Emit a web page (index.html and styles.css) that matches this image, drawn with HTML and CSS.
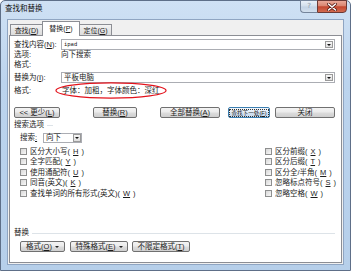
FILE: index.html
```html
<!DOCTYPE html>
<html lang="zh-CN">
<head>
  <meta charset="UTF-8">
  <title>查找和替换</title>
  <link rel="stylesheet" href="styles.css">
</head>
<body>
  <div class="window">
    <div class="titlebar">
      <span class="title">查找和替换</span>
      <div class="caption">
        <span class="cap-btn help">?</span>
        <span class="cap-btn close">
          <svg width="10" height="8" viewBox="0 0 10 8">
            <path d="M1.5 1 L8.5 7 M8.5 1 L1.5 7" stroke="#5a1d16" stroke-width="3" stroke-linecap="round"/>
            <path d="M1.5 1 L8.5 7 M8.5 1 L1.5 7" stroke="#fff" stroke-width="1.6" stroke-linecap="round"/>
          </svg>
        </span>
      </div>
    </div>

    <div class="client">
      <div class="tabs">
        <span class="tab">查找(<u>D</u>)</span>
        <span class="tab active">替换(<u>P</u>)</span>
        <span class="tab">定位(<u>G</u>)</span>
      </div>

      <div class="page">
        <div class="row field">
          <span class="lbl">查找内容(<u>N</u>):</span>
          <div class="combo">
            <span class="val mono">ipad</span>
            <span class="drop"><i class="arrow"></i></span>
          </div>
        </div>
        <div class="row info"><span class="lbl">选项:</span><span class="val">向下搜索</span></div>
        <div class="row info"><span class="lbl">格式:</span></div>

        <div class="row field replace">
          <span class="lbl">替换为(<u>I</u>):</span>
          <div class="combo">
            <span class="val">平板电脑</span>
            <span class="drop"><i class="arrow"></i></span>
          </div>
        </div>
        <div class="row fmt">
          <span class="lbl">格式:</span><span class="val">字体：加粗，字体颜色：深红</span>
        </div>

        <div class="row actions">
          <button class="btn less">&lt;&lt; 更少(<u>L</u>)</button>
          <button class="btn replace-one">替换(<u>R</u>)</button>
          <button class="btn replace-all">全部替换(<u>A</u>)</button>
          <button class="btn default find-next"><span class="focus">查找下一处(<u>F</u>)</span></button>
          <button class="btn close-btn">关闭</button>
        </div>

        <div class="section short">搜索选项</div>

        <div class="row search">
          <span class="search-lbl">搜索<u>:</u></span>
          <div class="select">
            <span class="val">向下</span>
            <span class="drop"><i class="arrow"></i></span>
          </div>
        </div>

        <div class="checks">
          <label class="check"><span class="box"></span>区分大小写(<u>H</u>)</label>
          <label class="check"><span class="box"></span>全字匹配(<u>Y</u>)</label>
          <label class="check"><span class="box"></span>使用通配符(<u>U</u>)</label>
          <label class="check"><span class="box"></span>同音(英文)(<u>K</u>)</label>
          <label class="check"><span class="box"></span>查找单词的所有形式(英文)(<u>W</u>)</label>
          <label class="check"><span class="box"></span>区分前缀(<u>X</u>)</label>
          <label class="check"><span class="box"></span>区分后缀(<u>T</u>)</label>
          <label class="check"><span class="box"></span>区分全/半角(<u>M</u>)</label>
          <label class="check"><span class="box"></span>忽略标点符号(<u>S</u>)</label>
          <label class="check"><span class="box"></span>忽略空格(<u>W</u>)</label>
        </div>

        <div class="section long">替换</div>

        <div class="row bottom">
          <button class="btn menu fmt-btn">格式(<u>O</u>)<i class="caret"></i></button>
          <button class="btn menu special">特殊格式(<u>E</u>)<i class="caret"></i></button>
          <button class="btn nofmt">不限定格式(<u>T</u>)</button>
        </div>

        <svg class="ring" width="112" height="17" viewBox="0 0 112 17">
          <ellipse cx="56" cy="8.5" rx="55" ry="7.6" fill="none" stroke="#e3121b" stroke-width="1.2"/>
        </svg>
      </div>
    </div>
  </div>
</body>
</html>
```

FILE: styles.css
```css
* {
  margin: 0;
  padding: 0;
  box-sizing: border-box;
}

body {
  width: 351px;
  height: 271px;
  overflow: hidden;
  background: #fff;
  font-family: "Liberation Sans", "Noto Sans CJK SC", sans-serif;
  font-size: 7.5px;
  line-height: 1;
  color: #1c1c1c;
  white-space: nowrap;
  text-autospace: no-autospace;
}

u {
  text-decoration: underline;
}

/* window frame */
.window {
  width: 351px;
  height: 271px;
  border: 1px solid #5e6f88;
  border-radius: 5px 5px 0 0;
  background: linear-gradient(#cfe1f4, #bcd4ee 30%, #b6cfea 100%);
  display: flex;
  flex-direction: column;
}

.titlebar {
  height: 18px;
  display: flex;
  justify-content: space-between;
  align-items: flex-start;
}

.title {
  padding: 4px 0 0 4px;
  color: #111;
}

.caption {
  display: flex;
  margin: -1px 3px 0 0;
}

.cap-btn {
  height: 13px;
  display: flex;
  align-items: center;
  justify-content: center;
}

.help {
  width: 17px;
  border: 1px solid #75859b;
  border-right: none;
  border-radius: 0 0 0 4px;
  background: linear-gradient(#e9f0f8, #d2deeb 48%, #c2d2e4 52%, #d3e0ee);
  color: #8a95a3;
  font-family: "DejaVu Sans", sans-serif;
  font-size: 7px;
}

.close {
  width: 30px;
  border: 1px solid #6b3a36;
  border-radius: 0 0 4px 0;
  background: linear-gradient(#eaa898, #d98570 45%, #c4472f 52%, #d26b50);
}

/* client area */
.client {
  flex: 1;
  margin: 0 6px 5px 6px;
  border: 1px solid #8fa5c2;
  background: #f0f0f0;
  padding: 1px;
  display: flex;
  flex-direction: column;
}

.tabs {
  height: 15px;
  margin-bottom: -1px;
  padding-left: 1px;
  display: flex;
  align-items: flex-start;
  position: relative;
  z-index: 1;
}

.tab {
  width: 33px;
  height: 11px;
  margin-top: 3px;
  border: 1px solid #8c8e94;
  border-bottom: none;
  background: linear-gradient(#f4f4f4, #e6e6e6 50%, #dcdcdc);
  display: flex;
  align-items: center;
  justify-content: center;
  font-size: 7px;
}

.tab.active {
  width: 38px;
  height: 15px;
  margin: 0 0 0 -1px;
  background: #fff;
  padding-bottom: 1px;
}

.tab + .tab:not(.active) {
  margin-left: -1px;
}

.page {
  flex: 1;
  position: relative;
  border: 1px solid #8c8e94;
  background: #fff;
  padding: 3px 6px 0 4px;
}

.row {
  display: flex;
  align-items: center;
}

.lbl {
  width: 47px;
  flex: none;
}

.field {
  height: 11px;
}

.field.replace {
  margin-top: 2px;
}

.info {
  height: 10px;
}

.fmt {
  height: 15px;
}

.fmt .val {
  padding-left: 1px;
}

.combo {
  flex: 1;
  height: 11px;
  border: 1px solid #abadb3;
  background: #fff;
  display: flex;
  align-items: center;
  justify-content: space-between;
  padding-left: 2px;
}

.mono {
  font-family: "DejaVu Sans Mono", monospace;
  font-size: 5.5px;
}

.drop {
  width: 8px;
  height: 7px;
  margin-right: 1px;
  border: 1px solid #9a9a9a;
  background: linear-gradient(#f6f6f6, #dedede);
  display: flex;
  align-items: center;
  justify-content: center;
}

.arrow {
  width: 0;
  height: 0;
  border-left: 2px solid transparent;
  border-right: 2px solid transparent;
  border-top: 2px solid #111;
}

/* buttons */
.btn {
  height: 11px;
  border: 1px solid #707070;
  border-radius: 2px;
  background: linear-gradient(#f3f3f3, #ebebeb 48%, #dddddd 52%, #cfcfcf);
  font: inherit;
  color: #1c1c1c;
  display: flex;
  align-items: center;
  justify-content: center;
  flex: none;
  white-space: nowrap;
}

.actions {
  height: 11px;
  margin-top: 9px;
}

.less { width: 46px; }
.replace-one { width: 44px; margin-left: 33px; }
.replace-all { width: 60px; margin-left: 23px; }
.find-next { width: 42px; margin-left: 8px; font-size: 5.6px; }
.close-btn { width: 60px; margin-left: 5px; }

.default {
  border-color: #3c7fb1;
  background: linear-gradient(#f1f6fb, #e5eef8 48%, #d3e2f2 52%, #c7d9ee);
}

.focus {
  border: 1px dotted #333;
  padding: 0 1px;
  line-height: 6px;
}

.section {
  height: 10px;
  display: flex;
  align-items: center;
}

.section::after {
  content: "";
  border-top: 1px solid #dde3e8;
  margin-left: 3px;
}

.section.short {
  margin-top: 2px;
}

.section.short::after {
  width: 6px;
}

.section.long {
  margin-top: 29.5px;
}

.section.long::after {
  flex: 1;
}

.search {
  height: 10px;
  margin-top: 3px;
  padding-left: 6px;
}

.search-lbl {
  width: 23px;
}

.select {
  width: 39px;
  height: 10px;
  border: 1px solid #abadb3;
  display: flex;
  align-items: center;
  justify-content: space-between;
  padding-left: 2px;
}

.select .drop {
  height: 8px;
  margin-right: 0;
}

/* checkboxes */
.checks {
  margin-top: 3px;
  padding-left: 6px;
  display: grid;
  grid-template-columns: 245px 1fr;
  grid-template-rows: repeat(5, 10.5px);
  grid-auto-flow: column;
}

.check {
  display: flex;
  align-items: center;
  gap: 3px;
}

.box {
  width: 7px;
  height: 7px;
  border: 1px solid #8e8f8f;
  background: linear-gradient(135deg, #d8d8d8, #f8f8f8);
}

.bottom {
  height: 11px;
  margin-top: 3px;
  padding-left: 6px;
  gap: 5px;
}

.fmt-btn { width: 45px; }
.special { width: 58px; }
.nofmt { width: 58px; margin-left: -1px; }

.caret {
  margin-left: 3px;
  width: 0;
  height: 0;
  border-left: 2px solid transparent;
  border-right: 2px solid transparent;
  border-top: 2px solid #222;
}

/* annotation drawn on the screenshot */
.ring {
  position: absolute;
  left: 45px;
  top: 46px;
}
```
